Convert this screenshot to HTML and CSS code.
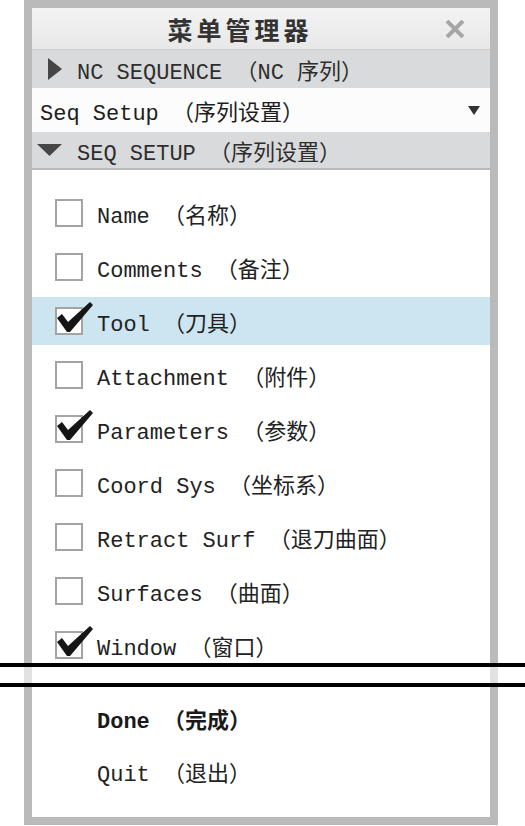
FILE: index.html
```html
<!DOCTYPE html>
<html lang="zh-CN">
<head>
<meta charset="utf-8">
<title>菜单管理器</title>
<link rel="stylesheet" href="styles.css">
</head>
<body>
<div class="page">
  <div class="panel panel-top">
    <div class="titlebar">
      <div class="title">菜单管理器</div>
      <div class="close">
        <svg width="20" height="18" viewBox="0 0 20 18"><path d="M2 1 L18 17 M18 1 L2 17" stroke="#a6a6a6" stroke-width="4" fill="none"/></svg>
      </div>
    </div>
    <div class="section collapsed">
      <svg class="tri-right" width="14" height="22" viewBox="0 0 14 22"><polygon points="0,0 14,11 0,22" fill="#464646"/></svg>
      <span class="label">NC SEQUENCE （NC 序列）</span>
    </div>
    <div class="dropdown">
      <span class="label">Seq Setup （序列设置）</span>
      <svg width="12" height="9" viewBox="0 0 12 9"><polygon points="0,0 12,0 6,9" fill="#333"/></svg>
    </div>
    <div class="section expanded">
      <svg class="tri-down" width="25" height="12" viewBox="0 0 25 12"><polygon points="0,0 25,0 12.5,12" fill="#464646"/></svg>
      <span class="label">SEQ SETUP （序列设置）</span>
    </div>
    <div class="list">
      <div class="item"><span class="box"></span><span class="label">Name （名称）</span></div>
      <div class="item"><span class="box"></span><span class="label">Comments （备注）</span></div>
      <div class="item selected"><span class="box checked"><svg class="check" width="38" height="32" viewBox="0 0 38 32"><polygon points="1,16 6,12 12,20 34,0 37,3 14,30 11,30" fill="#151515"/></svg></span><span class="label">Tool （刀具）</span></div>
      <div class="item"><span class="box"></span><span class="label">Attachment （附件）</span></div>
      <div class="item"><span class="box checked"><svg class="check" width="38" height="32" viewBox="0 0 38 32"><polygon points="1,16 6,12 12,20 34,0 37,3 14,30 11,30" fill="#151515"/></svg></span><span class="label">Parameters （参数）</span></div>
      <div class="item"><span class="box"></span><span class="label">Coord Sys （坐标系）</span></div>
      <div class="item"><span class="box"></span><span class="label">Retract Surf （退刀曲面）</span></div>
      <div class="item"><span class="box"></span><span class="label">Surfaces （曲面）</span></div>
      <div class="item"><span class="box checked"><svg class="check" width="38" height="32" viewBox="0 0 38 32"><polygon points="1,16 6,12 12,20 34,0 37,3 14,30 11,30" fill="#151515"/></svg></span><span class="label">Window （窗口）</span></div>
    </div>
  </div>
  <div class="break"><div class="break-frame"></div></div>
  <div class="panel panel-bottom">
    <div class="item action done"><span class="label">Done （完成）</span></div>
    <div class="item action"><span class="label">Quit （退出）</span></div>
  </div>
</div>
</body>
</html>
```
FILE: styles.css
```css
html, body {
  margin: 0;
  padding: 0;
  background: #ffffff;
}

.page {
  width: 525px;
  height: 826px;
  overflow: hidden;
  font-family: "Liberation Mono", "Noto Sans CJK SC", monospace;
  font-size: 22px;
  color: #222222;
}

.panel {
  margin-left: 24px;
  width: 474px;
  box-sizing: border-box;
  border: 8px solid #bababa;
  background: #ffffff;
}

.panel-top {
  height: 663px;
  border-bottom: none;
  overflow: hidden;
  display: flex;
  flex-direction: column;
}

.titlebar {
  height: 42px;
  flex: none;
  display: flex;
  align-items: center;
  background: linear-gradient(#f3f3f3, #e8e8e8);
  border-bottom: 1px solid #cdcdcd;
  box-sizing: border-box;
}

.title {
  flex: 1;
  text-align: center;
  font-family: "Noto Sans CJK SC", sans-serif;
  font-weight: bold;
  font-size: 25px;
  letter-spacing: 4px;
  color: #333333;
  padding-left: 4px;
  line-height: 42px;
}

.close {
  width: 45px;
  display: flex;
  align-items: center;
  justify-content: flex-start;
  padding-left: 1px;
}

.section {
  flex: none;
  display: flex;
  align-items: center;
  background: #d9dadb;
  color: #2e2e2e;
}

.section.collapsed {
  height: 38px;
  padding-left: 16px;
  gap: 15px;
}

.section.expanded {
  height: 36px;
  padding-left: 5px;
  gap: 15px;
  border-bottom: 2px solid #b9b9b9;
}

.dropdown {
  flex: none;
  height: 44px;
  display: flex;
  align-items: center;
  justify-content: space-between;
  padding: 0 10px 0 8px;
  background: #fcfcfc;
  color: #1e1e1e;
}

.label {
  white-space: nowrap;
}

.list {
  flex: none;
  display: flex;
  flex-direction: column;
  gap: 6px;
  padding-top: 19px;
}

.item {
  height: 48px;
  flex: none;
  display: flex;
  align-items: center;
  padding-left: 23px;
  gap: 14px;
}

.item.selected {
  background: #cde5f1;
}

.box {
  position: relative;
  width: 28px;
  height: 28px;
  box-sizing: border-box;
  border: 2px solid #a3a3a3;
  background: #ffffff;
  flex: none;
}

.check {
  position: absolute;
  left: -1px;
  top: -7px;
}

.break {
  height: 24px;
  box-sizing: border-box;
  border-top: 4px solid #000000;
  border-bottom: 4px solid #000000;
  background: #ffffff;
}

.break-frame {
  margin-left: 24px;
  width: 474px;
  height: 100%;
  box-sizing: border-box;
  border-left: 8px solid #e2e2e2;
  border-right: 8px solid #e2e2e2;
}

.panel-bottom {
  height: 138px;
  border-top: none;
  padding-top: 7px;
  display: flex;
  flex-direction: column;
  gap: 5px;
}

.item.action {
  padding-left: 65px;
}

.done {
  font-weight: bold;
  color: #1a1a1a;
}
```
